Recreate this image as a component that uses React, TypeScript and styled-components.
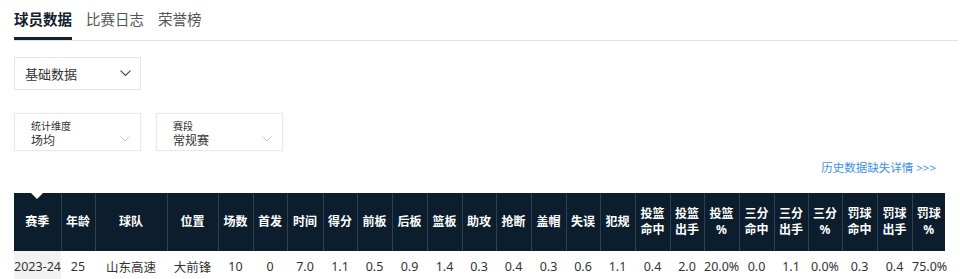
import styled, { createGlobalStyle } from 'styled-components'

const GlobalStyle = createGlobalStyle`
    body {
        margin: 0;
        background: #fff;
        font-family: "Noto Sans", "Noto Sans CJK SC", sans-serif;
    }
`

const Page = styled.div`
    padding: 0 2px 0 14px;
`
const Tabs = styled.div`
    display: flex;
    gap: 14px;
    height: 40px;
    border-bottom: 1px solid #e3e3e3;
`
const Tab = styled.div<{ active: boolean }>`
    display: flex;
    align-items: center;
    height: 37px;
    font-size: 14.5px;
    font-weight: ${(props) => (props.active ? '700' : '400')};
    color: ${(props) => (props.active ? '#13222f' : '#555')};
    border-bottom: 3px solid ${(props) => (props.active ? '#13222f' : 'transparent')};
`
const Select = styled.div`
    display: flex;
    align-items: center;
    justify-content: space-between;
    box-sizing: border-box;
    width: 127px;
    height: 33px;
    margin-top: 16px;
    padding: 0 9px 0 10px;
    border: 1px solid #e6e6e6;
    font-size: 13px;
    color: #333;
`
const Filters = styled.div`
    display: flex;
    gap: 15px;
    margin-top: 23px;
`
const Filter = styled.div`
    position: relative;
    box-sizing: border-box;
    width: 127px;
    height: 38px;
    padding: 6px 0 0 16px;
    border: 1px solid #e9e9e9;
    box-shadow: 0 0 2px rgba(0, 0, 0, 0.06);
    color: #333;
`
const FilterLabel = styled.div`
    font-size: 10px;
    line-height: 13px;
`
const FilterValue = styled.div`
    font-size: 12px;
    line-height: 16px;
`
const FilterArrow = styled.div`
    position: absolute;
    right: 10px;
    top: 11px;
`
const LinkRow = styled.div`
    display: flex;
    justify-content: flex-end;
    padding-right: 22px;
    margin-top: 9px;
    height: 16px;
`
const Link = styled.a`
    font-size: 11.5px;
    color: #3d8fe8;
    text-decoration: none;
    line-height: 16px;
`
const Table = styled.table`
    margin-top: 17px;
    width: 931px;
    border-collapse: collapse;
    table-layout: fixed;
`
const Th = styled.th<{ notch?: boolean }>`
    position: relative;
    height: 58px;
    padding: 0;
    background: #0c1e2d;
    border-left: 1px solid #2e4152;
    color: #fff;
    font-size: 12px;
    font-weight: 700;
    line-height: 16px;
    text-align: center;
    &:first-child {
        border-left: none;
    }
    &::before {
        content: '';
        display: ${(props) => (props.notch ? 'block' : 'none')};
        position: absolute;
        top: 0;
        left: 50%;
        margin-left: -6px;
        border-left: 6px solid transparent;
        border-right: 6px solid transparent;
        border-top: 6px solid #fff;
    }
`
const Td = styled.td<{ first?: boolean }>`
    height: 30px;
    padding: 0;
    background: ${(props) => (props.first ? '#f2f2f2' : '#fff')};
    color: #333;
    font-size: 12.5px;
    text-align: center;
    white-space: nowrap;
`

const Chevron = ({ color, size }: { color: string; size: number }) => (
    <svg width={size} height={size * 0.6} viewBox="0 0 10 6" fill="none">
        <path d="M0.5 0.5 L5 5 L9.5 0.5" stroke={color} strokeWidth="1" />
    </svg>
)

const columns: { title: string[]; width: number }[] = [
    { title: ['赛季'], width: 47 },
    { title: ['年龄'], width: 34 },
    { title: ['球队'], width: 72 },
    { title: ['位置'], width: 51 },
    { title: ['场数'], width: 35 },
    { title: ['首发'], width: 34 },
    { title: ['时间'], width: 36 },
    { title: ['得分'], width: 34 },
    { title: ['前板'], width: 35 },
    { title: ['后板'], width: 35 },
    { title: ['篮板'], width: 35 },
    { title: ['助攻'], width: 34 },
    { title: ['抢断'], width: 35 },
    { title: ['盖帽'], width: 35 },
    { title: ['失误'], width: 34 },
    { title: ['犯规'], width: 35 },
    { title: ['投篮', '命中'], width: 35 },
    { title: ['投篮', '出手'], width: 34 },
    { title: ['投篮', '%'], width: 35 },
    { title: ['三分', '命中'], width: 35 },
    { title: ['三分', '出手'], width: 34 },
    { title: ['三分', '%'], width: 34 },
    { title: ['罚球', '命中'], width: 35 },
    { title: ['罚球', '出手'], width: 35 },
    { title: ['罚球', '%'], width: 33 },
]

const row = ['2023-24', '25', '山东高速', '大前锋', '10', '0', '7.0', '1.1', '0.5', '0.9', '1.4', '0.3', '0.4', '0.3', '0.6', '1.1', '0.4', '2.0', '20.0%', '0.0', '1.1', '0.0%', '0.3', '0.4', '75.0%']

const App = () => {
    return (
        <Page>
            <GlobalStyle />
            <Tabs>
                <Tab active={true}>球员数据</Tab>
                <Tab active={false}>比赛日志</Tab>
                <Tab active={false}>荣誉榜</Tab>
            </Tabs>
            <Select>
                基础数据
                <Chevron color="#444" size={11} />
            </Select>
            <Filters>
                <Filter>
                    <FilterLabel>统计维度</FilterLabel>
                    <FilterValue>场均</FilterValue>
                    <FilterArrow><Chevron color="#c8c8c8" size={10} /></FilterArrow>
                </Filter>
                <Filter>
                    <FilterLabel>赛段</FilterLabel>
                    <FilterValue>常规赛</FilterValue>
                    <FilterArrow><Chevron color="#c8c8c8" size={10} /></FilterArrow>
                </Filter>
            </Filters>
            <LinkRow>
                <Link href="#">历史数据缺失详情 &gt;&gt;&gt;</Link>
            </LinkRow>
            <Table>
                <colgroup>
                    {columns.map((c, i) => <col key={i} style={{ width: c.width }} />)}
                </colgroup>
                <thead>
                    <tr>
                        {columns.map((c, i) =>
                            <Th key={i} notch={i === 0}>
                                {c.title.map((t, j) => <div key={j}>{t}</div>)}
                            </Th>
                        )}
                    </tr>
                </thead>
                <tbody>
                    <tr>
                        {row.map((v, i) => <Td key={i} first={i === 0}>{v}</Td>)}
                    </tr>
                </tbody>
            </Table>
        </Page>
    )
}

export default App
